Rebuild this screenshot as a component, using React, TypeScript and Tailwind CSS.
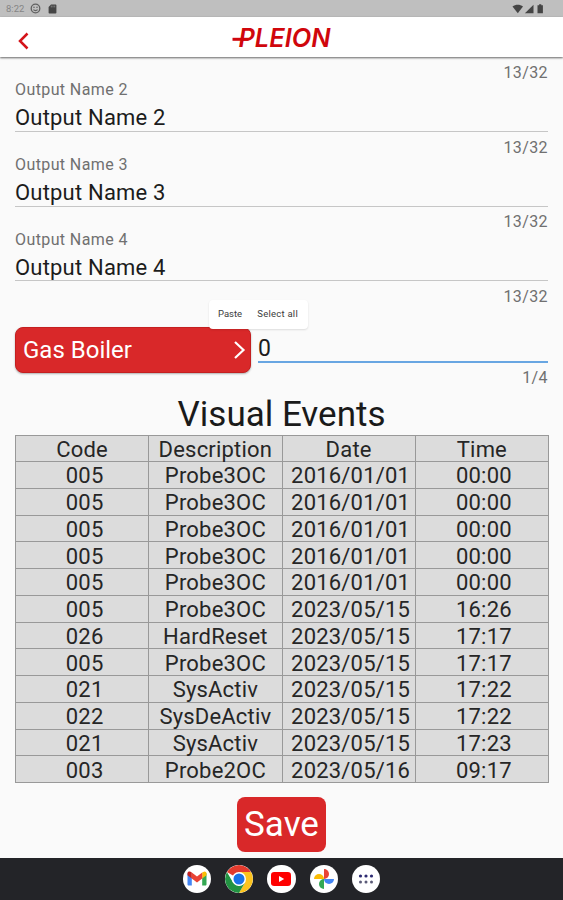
import React from 'react';

interface VisualEvent {
  code: string;
  description: string;
  date: string;
  time: string;
}

interface OutputFieldProps {
  label: string;
  value: string;
}

const outputs = ['Output Name 2', 'Output Name 3', 'Output Name 4'];

const events: VisualEvent[] = [
  { code: '005', description: 'Probe3OC', date: '2016/01/01', time: '00:00' },
  { code: '005', description: 'Probe3OC', date: '2016/01/01', time: '00:00' },
  { code: '005', description: 'Probe3OC', date: '2016/01/01', time: '00:00' },
  { code: '005', description: 'Probe3OC', date: '2016/01/01', time: '00:00' },
  { code: '005', description: 'Probe3OC', date: '2016/01/01', time: '00:00' },
  { code: '005', description: 'Probe3OC', date: '2023/05/15', time: '16:26' },
  { code: '026', description: 'HardReset', date: '2023/05/15', time: '17:17' },
  { code: '005', description: 'Probe3OC', date: '2023/05/15', time: '17:17' },
  { code: '021', description: 'SysActiv', date: '2023/05/15', time: '17:22' },
  { code: '022', description: 'SysDeActiv', date: '2023/05/15', time: '17:22' },
  { code: '021', description: 'SysActiv', date: '2023/05/15', time: '17:23' },
  { code: '003', description: 'Probe2OC', date: '2023/05/16', time: '09:17' },
];

const StatusBar: React.FC = () => (
  <div className="flex h-[17px] items-center justify-between bg-[#bfbfbf] pl-1.5 pr-[18px]">
    <div className="flex items-center">
      <span className="w-6 text-[9.5px] leading-none text-[#858585]">8:22</span>
      <svg className="h-[11px] w-[11px]" viewBox="0 0 11 11" fill="none" stroke="#606060">
        <circle cx="5.5" cy="5.5" r="4.3" strokeWidth="1.3" />
        <path d="M3.2 4.3h1.6M6.2 4.3h1.6M3.4 6.6c1.2 1.3 3 1.3 4.2 0" strokeWidth="1.1" />
      </svg>
      <svg className="ml-[7px] h-[10px] w-[9px]" viewBox="0 0 9 10">
        <path d="M3 0.5h4.6a.8.8 0 0 1 .8.8v7.4a.8.8 0 0 1-.8.8H1.4a.8.8 0 0 1-.8-.8V3z" fill="#454545" />
        <path d="M3.3 1.6v1.8M5 1.6v1.8M6.7 1.6v1.8" stroke="#9a9a9a" strokeWidth=".7" />
      </svg>
    </div>
    <svg className="mt-px h-[10px] w-[33px]" viewBox="0 0 33 10" fill="#444">
      <path d="M0.5 2.6C3.5 0 8 0 11 2.6L5.8 9.3z" />
      <path d="M21.5 0.8v8.4h-8.6z" />
      <path d="M25.5 1.2h1.6V.3h2.2v.9h1.6v8.1h-5.4z" />
    </svg>
  </div>
);

const Header: React.FC = () => (
  <header className="relative z-10 flex h-10 items-center bg-white px-3 shadow-[0_1px_2px_rgba(0,0,0,0.6)]">
    <div className="flex flex-1 items-center">
      <svg className="mt-[7px] h-6 w-6" viewBox="0 0 24 24" fill="none" stroke="#d4141a" strokeWidth="2.5">
        <path d="M15.5 4.5 8 12l7.5 7.5" />
      </svg>
    </div>
    <svg className="h-10 w-[104px]" viewBox="0 0 104 40" role="img" aria-label="PLEION">
      <text
        x="8.5"
        y="29.5"
        textLength="92"
        lengthAdjust="spacingAndGlyphs"
        className="fill-[#d0060c] font-[Inter,sans-serif] text-[25.5px] font-semibold italic"
      >
        PLEION
      </text>
      <path d="M2.5 22.3h16" stroke="#d0060c" strokeWidth="3" />
    </svg>
    <div className="flex-1" />
  </header>
);

const OutputField: React.FC<OutputFieldProps> = ({ label, value }) => (
  <div className="h-[74.7px]">
    <div className="h-[53px] border-b border-[#c6c6c6]">
      <div className="pt-[1.2px] text-[16px] leading-5 tracking-[0.4px] text-[#707070]">{label}</div>
      <div className="pt-[5px] text-[22px] leading-[26px] tracking-[0.2px] text-[#1c1c1c]">{value}</div>
    </div>
    <div className="pt-[5.5px] text-right text-[16px] leading-5 tracking-[0.4px] text-[#707070]">13/32</div>
  </div>
);

const ContextMenu: React.FC = () => (
  <div className="absolute left-[209px] top-[300px] z-20 flex h-[29px] w-[99px] items-center justify-between rounded bg-white pl-[9px] pr-2.5 text-[9.5px] text-[#3c3c3c] shadow-[0_1px_2px_rgba(0,0,0,0.12)]">
    <span>Paste</span>
    <span className="tracking-[0.25px]">Select all</span>
  </div>
);

const EventsTable: React.FC = () => (
  <table className="h-[348px] w-[534px] table-fixed border-collapse bg-[#dcdcdc] text-center text-[22px] leading-[23px] tracking-[0.2px] text-[#262626]">
    <thead>
      <tr>
        {['Code', 'Description', 'Date', 'Time'].map((title) => (
          <th key={title} className="border border-[#999] p-0 pt-0.5 font-normal">
            {title}
          </th>
        ))}
      </tr>
    </thead>
    <tbody>
      {events.map((event, index) => (
        <tr key={index}>
          <td className="border border-[#999] p-0 pl-[5px] pt-0.5">{event.code}</td>
          <td className="border border-[#999] p-0 pt-0.5">{event.description}</td>
          <td className="border border-[#999] p-0 pl-1 pt-0.5">{event.date}</td>
          <td className="border border-[#999] p-0 pl-1 pt-0.5">{event.time}</td>
        </tr>
      ))}
    </tbody>
  </table>
);

const GmailIcon: React.FC = () => (
  <svg className="h-[15px] w-5" viewBox="0 0 20 15">
    <path d="M.5 2v11.2c0 .7.5 1.3 1.3 1.3h3V7z" fill="#4285f4" />
    <path d="M19.5 2v11.2c0 .7-.5 1.3-1.3 1.3h-3V7z" fill="#34a853" />
    <path d="M15.2 1.6v5.9l4.3-3.3V2.4c0-2-2-2.5-3.3-1.5z" fill="#fbbc04" />
    <path d="M.5 4.2V2.4C.5.4 2.5 0 3.8.9l1 .7v5.9z" fill="#c5221f" />
    <path d="M4.8 1.6 10 5.5l5.2-3.9v5.9L10 11.4 4.8 7.5z" fill="#ea4335" />
  </svg>
);

const ChromeIcon: React.FC = () => (
  <svg className="h-7 w-7" viewBox="0 0 28 28">
    <path d="M14 14 1.9 7A14 14 0 0 1 26.1 7z" fill="#e33b2e" />
    <path d="M14 7H26.1A14 14 0 0 1 14 28L20 17.5z" fill="#fcc31e" />
    <path d="M1.9 7 8 17.5 14 21 20 17.5 14 28A14 14 0 0 1 1.9 7z" fill="#229342" />
    <circle cx="14" cy="14" r="7" fill="#fff" />
    <circle cx="14" cy="14" r="5.5" fill="#1a73e8" />
  </svg>
);

const YoutubeIcon: React.FC = () => (
  <svg className="h-[14px] w-5" viewBox="0 0 20 14">
    <rect width="20" height="14" rx="3.2" fill="#f00" />
    <path d="M8 4v6l5.2-3z" fill="#fff" />
  </svg>
);

const PhotosIcon: React.FC = () => (
  <svg className="h-[22px] w-[22px]" viewBox="0 0 22 22">
    <path d="M11 1a5 5 0 0 1 0 10z" fill="#ea4335" />
    <path d="M21 11a5 5 0 0 1-10 0z" fill="#4285f4" />
    <path d="M11 21a5 5 0 0 1 0-10z" fill="#34a853" />
    <path d="M1 11a5 5 0 0 1 10 0z" fill="#fbbc04" />
  </svg>
);

const AppsIcon: React.FC = () => (
  <svg className="h-2.5 w-4" viewBox="0 0 16 10">
    {[2.5, 8, 13.5].map((x) => (
      <React.Fragment key={x}>
        <circle cx={x} cy="2" r="1.6" fill="#2d2a72" />
        <circle cx={x} cy="8" r="1.5" fill="#5b5b78" />
      </React.Fragment>
    ))}
  </svg>
);

const Taskbar: React.FC = () => (
  <nav className="flex h-[42px] shrink-0 items-center justify-center gap-3.5 bg-[#232428]">
    {[GmailIcon, ChromeIcon, YoutubeIcon, PhotosIcon, AppsIcon].map((Icon, index) => (
      <div key={index} className="flex h-[28.3px] w-[28.3px] items-center justify-center overflow-hidden rounded-full bg-white">
        <Icon />
      </div>
    ))}
  </nav>
);

const App: React.FC = () => {
  return (
    <div className="relative flex h-[900px] w-[563px] flex-col overflow-hidden bg-[#fafafa] font-[Roboto,sans-serif]">
      <StatusBar />
      <Header />

      <main className="flex flex-1 flex-col px-[15px]">
        <div className="h-[22px] pt-[5.5px] text-right text-[16px] leading-5 tracking-[0.4px] text-[#707070]">13/32</div>
        {outputs.map((name) => (
          <OutputField key={name} label={name} value={name} />
        ))}

        <div className="mt-[24px] flex h-[58px] gap-[7px]">
          <button className="flex h-[46px] w-[236px] items-center justify-between rounded-lg border border-[#c41f20] bg-[#d92829] pl-[7px] pr-1 text-[24px] leading-none text-white shadow-[0_1px_2px_rgba(0,0,0,0.3)]">
            Gas Boiler
            <svg className="h-5 w-3.5" viewBox="0 0 14 20" fill="none" stroke="#fff" strokeWidth="2.2">
              <path d="m3 2 8.5 8L3 18" />
            </svg>
          </button>
          <div className="flex-1">
            <div className="h-[35.5px] border-b-2 border-[#68a6e2] pt-[9px] text-[23px] leading-[26px] text-[#1c1c1c]">0</div>
            <div className="pt-[5.5px] text-right text-[16px] leading-5 tracking-[0.4px] text-[#707070]">1/4</div>
          </div>
        </div>

        <h1 className="h-[50px] pt-[6px] text-center text-[35px] leading-[48px] text-[#1a1a1a]">Visual Events</h1>
        <EventsTable />

        <button className="mt-[14px] h-[55px] w-[89px] self-center rounded-lg bg-[#d92829] text-[35px] leading-none text-white">
          Save
        </button>
      </main>

      <ContextMenu />
      <Taskbar />
    </div>
  );
};

export default App;
